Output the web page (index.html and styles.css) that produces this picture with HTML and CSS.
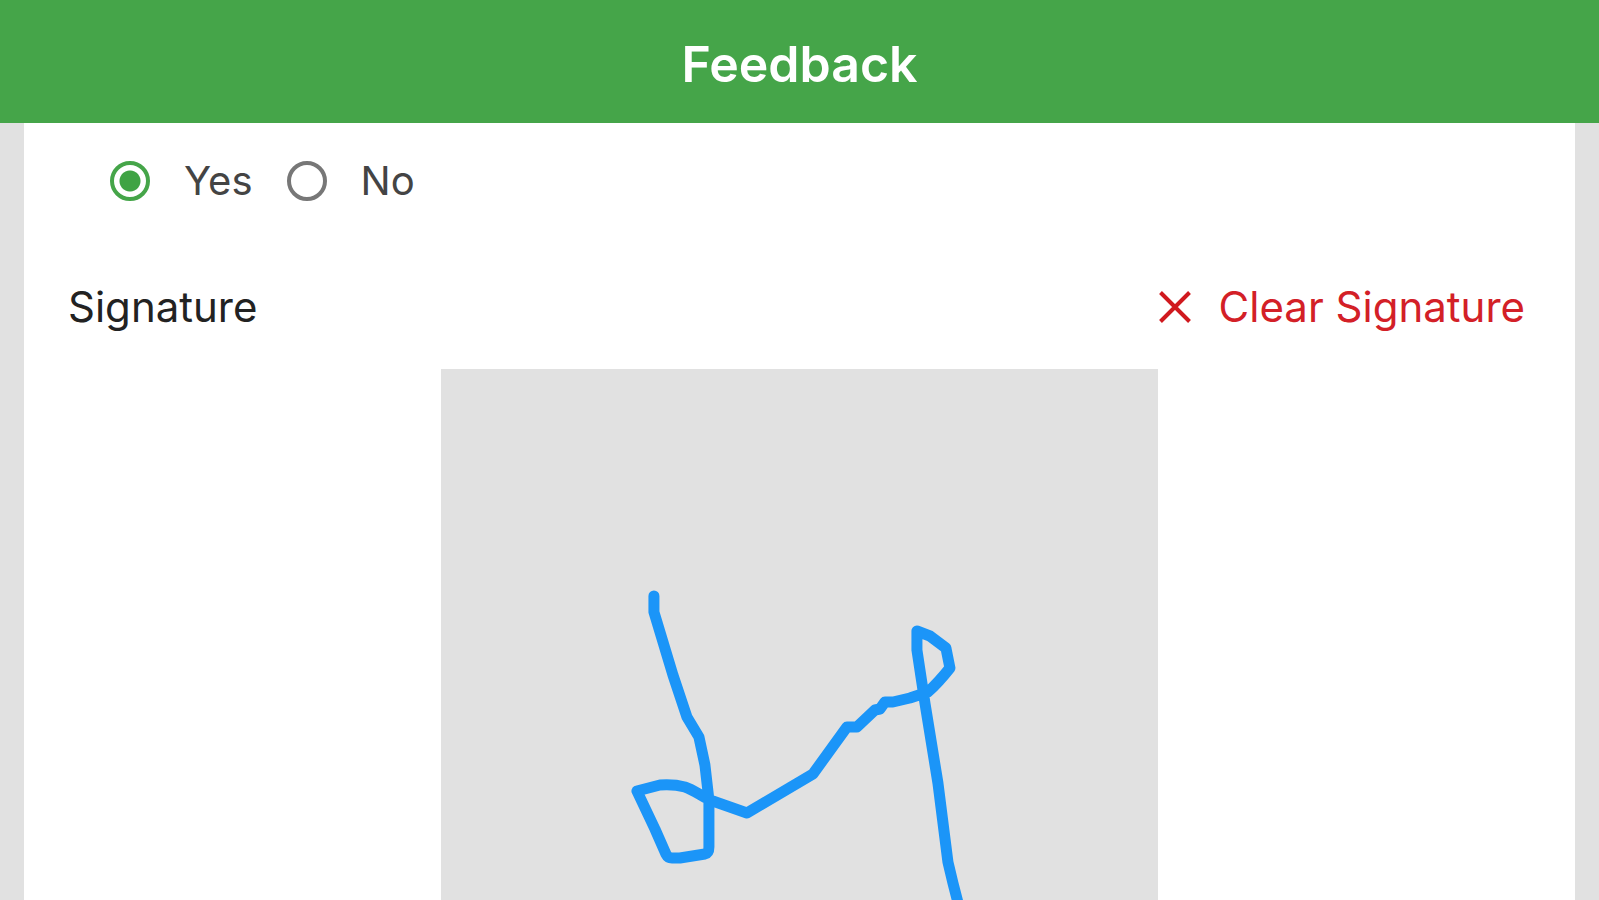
FILE: index.html
```html
<!DOCTYPE html>
<html lang="en">
<head>
    <meta charset="UTF-8">
    <meta name="viewport" content="width=device-width, initial-scale=1.0">
    <title>Feedback</title>
    <link rel="stylesheet" href="styles.css">
</head>
<body>
    <header class="app-bar">
        <h1>Feedback</h1>
    </header>

    <main class="card">
        <div class="options">
            <label class="option">
                <input type="radio" name="answer" value="yes" checked>
                <span>Yes</span>
            </label>
            <label class="option">
                <input type="radio" name="answer" value="no">
                <span>No</span>
            </label>
        </div>

        <div class="signature-header">
            <h2>Signature</h2>
            <button type="button" class="clear-btn">
                <svg class="clear-icon" viewBox="0 0 32 32" aria-hidden="true">
                    <path d="M1.5 1.5 30.5 30.5M30.5 1.5 1.5 30.5"/>
                </svg>
                Clear Signature
            </button>
        </div>

        <div class="signature-pad">
            <svg viewBox="0 0 719 531" preserveAspectRatio="xMidYMin slice" role="img" aria-label="Signature">
                <path d="M214 227V243L233 306 247 348 259 368 265 396 269 431V478Q269 484 265 485L240 489H232Q228 489 226 485L215 460 197 422 220 416Q234 415 245 418C254 421 261 427 270 431L307 444 373 405 407 358H417L435 341 440 340 445 333H453L470 329 488 323Q499 313 510 299L506 279 490 267 477 262V281L485 334 498 414 508 493 513 514 530 580"/>
            </svg>
        </div>
    </main>
</body>
</html>
```
FILE: styles.css
```css
* {
    box-sizing: border-box;
}
body {
    display: flex;
    flex-direction: column;
    height: 100vh;
    margin: 0;
    background-color: #e1e1e1;
    color: #222;
    font-family: Inter, "Liberation Sans", sans-serif;
    font-size: 42px;
    line-height: 48px;
}
h1,
h2 {
    margin: 0;
    font-size: inherit;
    line-height: inherit;
}
.app-bar {
    flex: none;
    padding: 36px 24px 31px;
    background-color: #45a549;
    color: #fff;
    font-size: 50px;
    line-height: 56px;
    text-align: center;
}
.app-bar h1 {
    font-weight: 600;
}
.card {
    display: flex;
    flex: 1;
    flex-direction: column;
    min-height: 0;
    margin: 0 24px;
    padding: 34px 44px 0;
    background-color: #fff;
}
.options {
    display: flex;
    gap: 34px;
    padding-left: 42px;
    color: #444;
    font-size: 40px;
}
.option {
    display: flex;
    align-items: center;
    gap: 34px;
    cursor: pointer;
}
.option input {
    appearance: none;
    width: 40px;
    height: 40px;
    margin: 0;
    border: 4px solid #777;
    border-radius: 50%;
}
.option input:checked {
    border-color: #45a549;
    background: radial-gradient(circle, #3fa344 10px, transparent 11px);
}
.signature-header {
    display: flex;
    justify-content: space-between;
    align-items: center;
    margin: 78px 6px 38px 0;
}
.signature-header h2 {
    font-weight: 400;
}
.clear-btn {
    display: flex;
    align-items: center;
    gap: 28px;
    padding: 0;
    border: none;
    background: none;
    color: #d32027;
    font: inherit;
    cursor: pointer;
}
.clear-icon {
    width: 32px;
    height: 32px;
    fill: none;
    stroke: #d0191e;
    stroke-width: 4;
}
.signature-pad {
    flex: 1;
    align-self: center;
    width: 49%;
    min-height: 0;
    background-color: #e1e1e1;
}
.signature-pad svg {
    display: block;
    width: 100%;
    height: 100%;
    fill: none;
    stroke: #1b95f8;
    stroke-width: 11;
    stroke-linecap: round;
    stroke-linejoin: round;
}
```
